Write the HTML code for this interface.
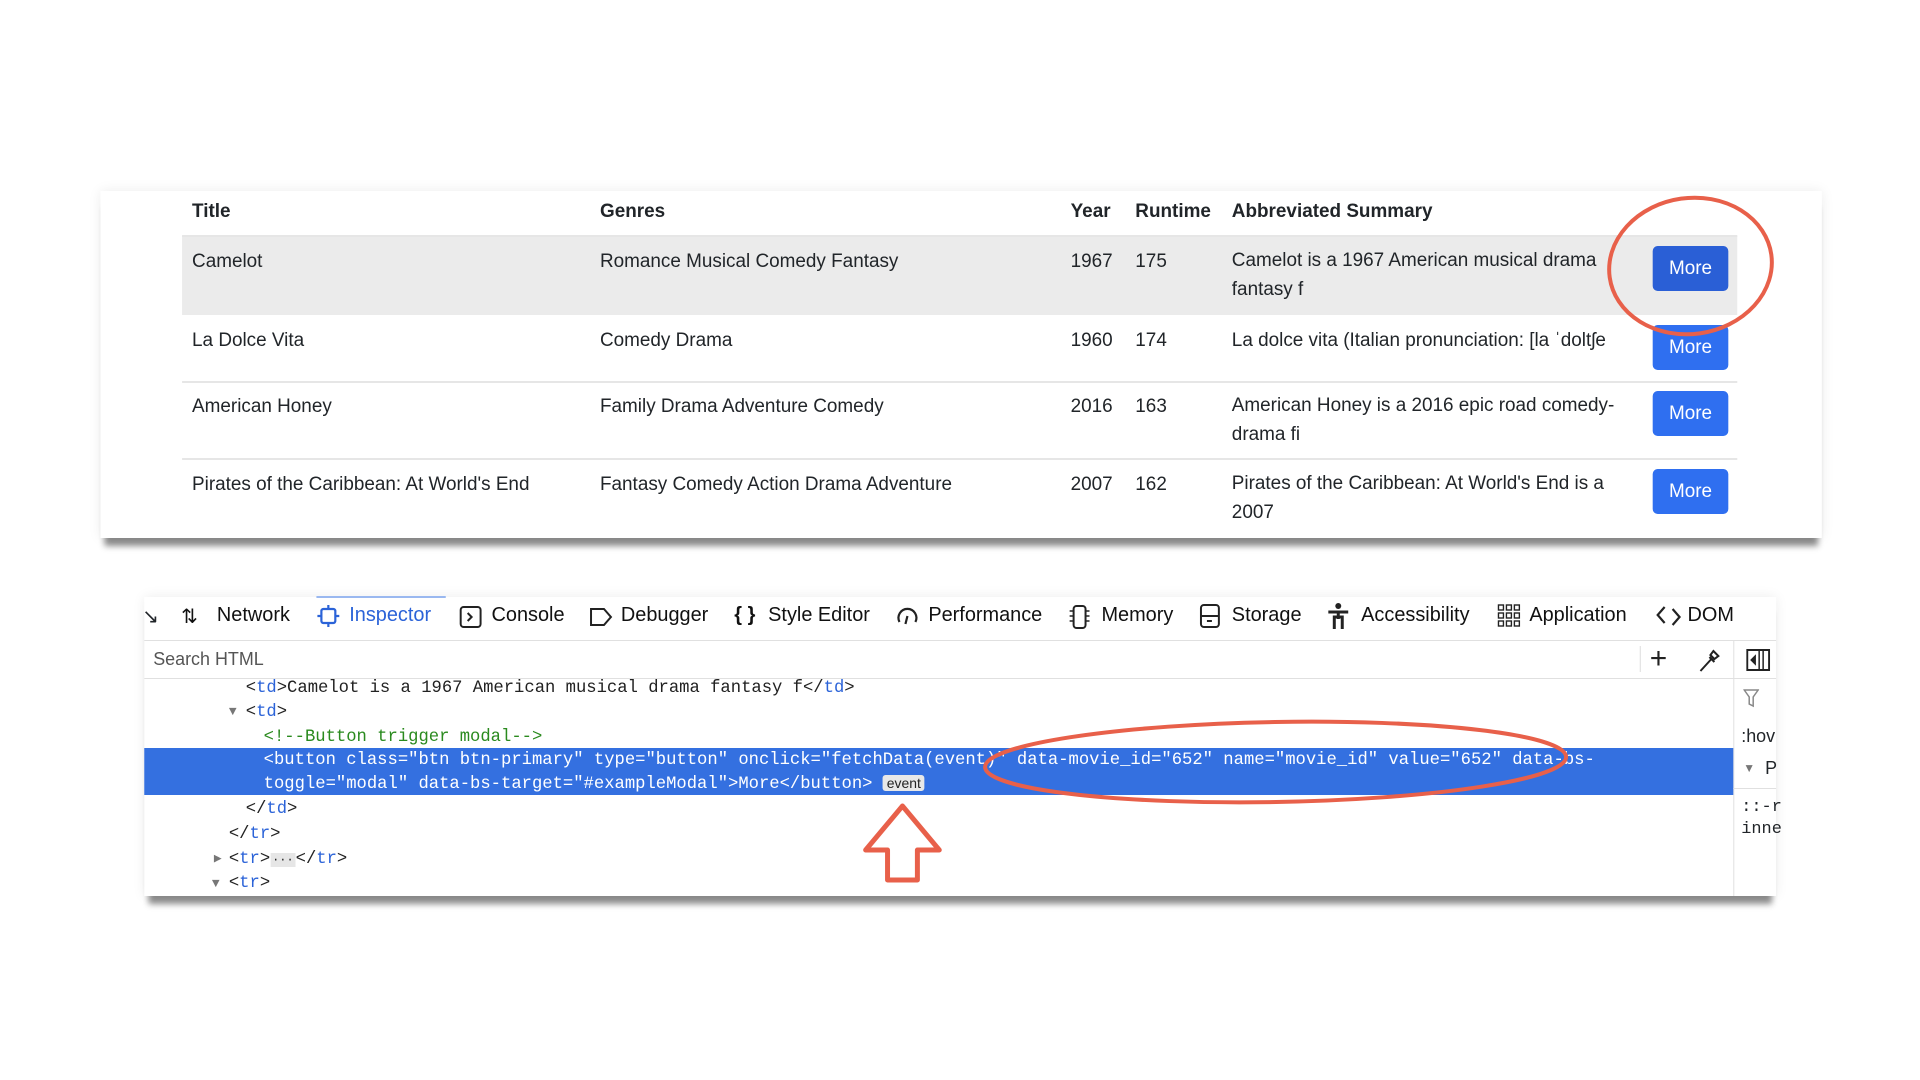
<!DOCTYPE html>
<html><head><meta charset="utf-8"><style>
*{margin:0;padding:0;box-sizing:border-box}
body{width:1920px;height:1080px;background:#fff;position:relative;overflow:hidden;font-family:"Liberation Sans",sans-serif;color:#212529}
#w{position:absolute;left:0;top:0;width:1920px;height:1080px;transform:scale(0.995,1);transform-origin:0 0}
.a{position:absolute;white-space:nowrap}
.card{position:absolute;left:101px;top:191px;width:1730px;height:347px;background:#fff;box-shadow:0 0 12px rgba(0,0,0,.08),0 12px 6px -4px rgba(0,0,0,.45)}
.t{font-size:19px}
.h{font-size:19px;font-weight:bold}
.btn{position:absolute;left:1661px;width:76px;height:45px;background:#2f6ff0;border-radius:5px;color:#fff;font-size:19px;text-align:center;line-height:45px}
.hr{position:absolute;left:183px;width:1563px;height:2px;background:#e6e6e6}
.dev{position:absolute;left:145px;top:597px;width:1640px;height:299px;background:#fff;box-shadow:0 0 12px rgba(0,0,0,.08),0 12px 6px -4px rgba(0,0,0,.45);overflow:hidden}
.tab{position:absolute;top:604px;font-size:20px;color:#111}
.code{position:absolute;font-family:"Liberation Mono",monospace;font-size:17.3px;letter-spacing:0;white-space:nowrap;color:#222}
.tg{color:#2b63d8}
</style></head><body><div id="w">
<div class="card"></div>
<div class="a h" style="left:193px;top:201px">Title</div>
<div class="a h" style="left:603px;top:201px">Genres</div>
<div class="a h" style="left:1076px;top:201px">Year</div>
<div class="a h" style="left:1141px;top:201px">Runtime</div>
<div class="a h" style="left:1238px;top:201px">Abbreviated Summary</div>
<div style="position:absolute;left:183px;top:236px;width:1563px;height:79px;background:#ebebeb"></div>
<div class="hr" style="top:235px"></div>
<div class="hr" style="top:381px"></div>
<div class="hr" style="top:458px"></div>

<div class="a t" style="left:193px;top:251px">Camelot</div>
<div class="a t" style="left:603px;top:251px">Romance Musical Comedy Fantasy</div>
<div class="a t" style="left:1076px;top:251px">1967</div>
<div class="a t" style="left:1141px;top:251px">175</div>
<div class="a t" style="left:1238px;top:246px;line-height:29px">Camelot is a 1967 American musical drama<br>fantasy f</div>

<div class="a t" style="left:193px;top:330px">La Dolce Vita</div>
<div class="a t" style="left:603px;top:330px">Comedy Drama</div>
<div class="a t" style="left:1076px;top:330px">1960</div>
<div class="a t" style="left:1141px;top:330px">174</div>
<div class="a t" style="left:1238px;top:330px">La dolce vita (Italian pronunciation: [la ˈdoltʃe</div>

<div class="a t" style="left:193px;top:396px">American Honey</div>
<div class="a t" style="left:603px;top:396px">Family Drama Adventure Comedy</div>
<div class="a t" style="left:1076px;top:396px">2016</div>
<div class="a t" style="left:1141px;top:396px">163</div>
<div class="a t" style="left:1238px;top:391px;line-height:29px">American Honey is a 2016 epic road comedy-<br>drama fi</div>

<div class="a t" style="left:193px;top:474px">Pirates of the Caribbean: At World's End</div>
<div class="a t" style="left:603px;top:474px">Fantasy Comedy Action Drama Adventure</div>
<div class="a t" style="left:1076px;top:474px">2007</div>
<div class="a t" style="left:1141px;top:474px">162</div>
<div class="a t" style="left:1238px;top:469px;line-height:29px">Pirates of the Caribbean: At World's End is a<br>2007</div>

<div class="btn" style="top:246px;background:#2a5fd6">More</div>
<div class="btn" style="top:325px">More</div>
<div class="btn" style="top:391px">More</div>
<div class="btn" style="top:469px">More</div>

<div class="dev"></div>
<div style="position:absolute;left:145px;top:640px;width:1640px;height:1px;background:#e0e0e0"></div>
<div style="position:absolute;left:145px;top:678px;width:1640px;height:1px;background:#e0e0e0"></div>
<div style="position:absolute;left:1742px;top:640px;width:1px;height:256px;background:#e0e0e0"></div>
<div style="position:absolute;left:1648px;top:646px;width:1px;height:26px;background:#ddd"></div>
<div style="position:absolute;left:318px;top:596px;width:130px;height:2px;background:#9ab8f0"></div>
<div class="a" style="left:143px;top:604px;font-size:20px">&#x2198;</div>
<div class="tab" style="left:182px">⇅</div>
<div class="tab" style="left:218px">Network</div>
<svg class="a" style="left:318px;top:604px" width="24" height="24" viewBox="0 0 24 24"><rect x="5" y="5" width="14" height="14" rx="2" fill="none" stroke="#2b63d8" stroke-width="2.2"/><path d="M12 1v4M12 19v4M1 12h4M19 12h4" stroke="#2b63d8" stroke-width="2.2"/></svg>
<div class="tab" style="left:351px;color:#2b63d8">Inspector</div>
<svg class="a" style="left:461px;top:605px" width="24" height="24" viewBox="0 0 24 24"><rect x="2" y="2" width="20" height="20" rx="3" fill="none" stroke="#222" stroke-width="2"/><path d="M9 8l4 4-4 4" fill="none" stroke="#222" stroke-width="2"/></svg>
<div class="tab" style="left:494px">Console</div>
<svg class="a" style="left:591px;top:605px" width="26" height="24" viewBox="0 0 26 24"><path d="M3 4h13l7 8-7 8H3z" fill="none" stroke="#222" stroke-width="2"/></svg>
<div class="tab" style="left:624px">Debugger</div>
<div class="tab" style="left:738px;font-weight:bold">{ }</div>
<div class="tab" style="left:772px">Style Editor</div>
<svg class="a" style="left:900px;top:604px" width="24" height="24" viewBox="0 0 24 24"><path d="M4 18A9 9 0 1 1 20 18" fill="none" stroke="#222" stroke-width="2.2"/><path d="M12 12l-2 8" stroke="#222" stroke-width="2.2"/></svg>
<div class="tab" style="left:933px">Performance</div>
<svg class="a" style="left:1073px;top:604px" width="24" height="26" viewBox="0 0 24 26"><rect x="6" y="2" width="12" height="22" rx="3" fill="none" stroke="#222" stroke-width="2"/><path d="M2 7h4M2 12h4M2 17h4M18 7h4M18 12h4M18 17h4" stroke="#222" stroke-width="1.5"/></svg>
<div class="tab" style="left:1107px">Memory</div>
<svg class="a" style="left:1205px;top:603px" width="22" height="26" viewBox="0 0 22 26"><rect x="2" y="2" width="18" height="22" rx="3" fill="none" stroke="#222" stroke-width="2"/><path d="M2 13h18M8 18h5" stroke="#222" stroke-width="2"/></svg>
<div class="tab" style="left:1238px">Storage</div>
<svg class="a" style="left:1333px;top:602px" width="24" height="28" viewBox="0 0 24 28"><circle cx="12" cy="4" r="3" fill="#222"/><path d="M2 10h20M12 9v8M8 27V15h8v12" fill="none" stroke="#222" stroke-width="3"/></svg>
<div class="tab" style="left:1368px">Accessibility</div>
<svg class="a" style="left:1505px;top:604px" width="24" height="24" viewBox="0 0 24 24" fill="none" stroke="#222" stroke-width="1.4"><rect x="1" y="1" width="5" height="5"/><rect x="9" y="1" width="5" height="5"/><rect x="17" y="1" width="5" height="5"/><rect x="1" y="9" width="5" height="5"/><rect x="9" y="9" width="5" height="5"/><rect x="17" y="9" width="5" height="5"/><rect x="1" y="17" width="5" height="5"/><rect x="9" y="17" width="5" height="5"/><rect x="17" y="17" width="5" height="5"/></svg>
<div class="tab" style="left:1537px">Application</div>
<svg class="a" style="left:1664px;top:604px" width="26" height="24" viewBox="0 0 26 24"><path d="M9 3L2 11l7 8M17 5l7 8-7 8" fill="none" stroke="#222" stroke-width="2.2"/></svg>
<div class="tab" style="left:1696px">DOM</div>

<div class="a" style="left:154px;top:649px;font-size:18px;color:#555">Search HTML</div>
<div class="a" style="left:1658px;top:644px;font-size:30px;line-height:30px;color:#222">+</div>
<svg class="a" style="left:1706px;top:648px" width="24" height="26" viewBox="0 0 24 26"><path d="M3 23l11-12M12 9l5 5M16 3l5 5-4 3-4-4z" fill="none" stroke="#222" stroke-width="2"/></svg>
<svg class="a" style="left:1755px;top:649px" width="24" height="22" viewBox="0 0 24 22"><rect x="1" y="1" width="22" height="20" fill="none" stroke="#222" stroke-width="2"/><path d="M13 1v20M17 1v20M9 7l-4 4 4 4z" stroke="#222" stroke-width="1.5" fill="#222"/></svg>

<div style="position:absolute;left:145px;top:748px;width:1597px;height:47px;background:#3470e0"></div>
<div class="code" style="left:247px;top:679px"><span>&lt;</span><span class="tg">td</span>&gt;Camelot is a 1967 American musical drama fantasy f&lt;/<span class="tg">td</span>&gt;</div>
<div class="code" style="left:230px;top:704px;color:#777;font-size:13px">▼</div>
<div class="code" style="left:247px;top:703px">&lt;<span class="tg">td</span>&gt;</div>
<div class="code" style="left:265px;top:728px;color:#2a8a1e">&lt;!--Button trigger modal--&gt;</div>
<div class="code" style="left:265px;top:749px;color:#fff;line-height:23px">&lt;button class="btn btn-primary" type="button" onclick="fetchData(event)" data-movie_id="652" name="movie_id" value="652" data-bs-<br>toggle="modal" data-bs-target="#exampleModal"&gt;More&lt;/button&gt; <span style="background:#e8e8e8;color:#222;font-family:'Liberation Sans',sans-serif;font-size:14px;padding:0 4px;border-radius:3px">event</span></div>
<div class="code" style="left:247px;top:800px">&lt;/<span class="tg">td</span>&gt;</div>
<div class="code" style="left:230px;top:825px">&lt;/<span class="tg">tr</span>&gt;</div>
<div class="code" style="left:215px;top:851px;color:#777;font-size:13px">▶</div>
<div class="code" style="left:230px;top:850px">&lt;<span class="tg">tr</span>&gt;<span style="background:#e6e6e6;font-size:12px;padding:0 2px">···</span>&lt;/<span class="tg">tr</span>&gt;</div>
<div class="code" style="left:213px;top:876px;color:#777;font-size:13px">▼</div>
<div class="code" style="left:230px;top:874px">&lt;<span class="tg">tr</span>&gt;</div>

<svg class="a" style="left:1752px;top:688px" width="16" height="20" viewBox="0 0 16 20"><path d="M1 2h14l-5 7v9l-4-2V9z" fill="none" stroke="#888" stroke-width="1.5"/></svg>
<div class="a" style="left:1750px;top:726px;font-size:18px">:hov</div>
<div class="a" style="left:1752px;top:761px;font-size:12px;color:#777">▼</div>
<div class="a" style="left:1774px;top:758px;font-size:18px">P</div>
<div style="position:absolute;left:1742px;top:788px;width:43px;height:1px;background:#e0e0e0"></div>
<div class="a" style="left:1750px;top:797px;font-family:'Liberation Mono',monospace;font-size:17px;line-height:22px">::-r<br>inne</div>

<svg class="a" style="left:0;top:0" width="1920" height="1080">
<ellipse cx="1699" cy="266" rx="82" ry="68" fill="none" stroke="#e8604a" stroke-width="4" transform="rotate(-8 1699 266)"/>
<ellipse cx="1282" cy="762" rx="292" ry="40" fill="none" stroke="#e8604a" stroke-width="4" transform="rotate(-1 1282 762)"/>
<path d="M907 806L870 850h22v30h30v-30h22z" fill="#fff" stroke="#e8604a" stroke-width="5" stroke-linejoin="round"/>
</svg>
</div></body></html>
